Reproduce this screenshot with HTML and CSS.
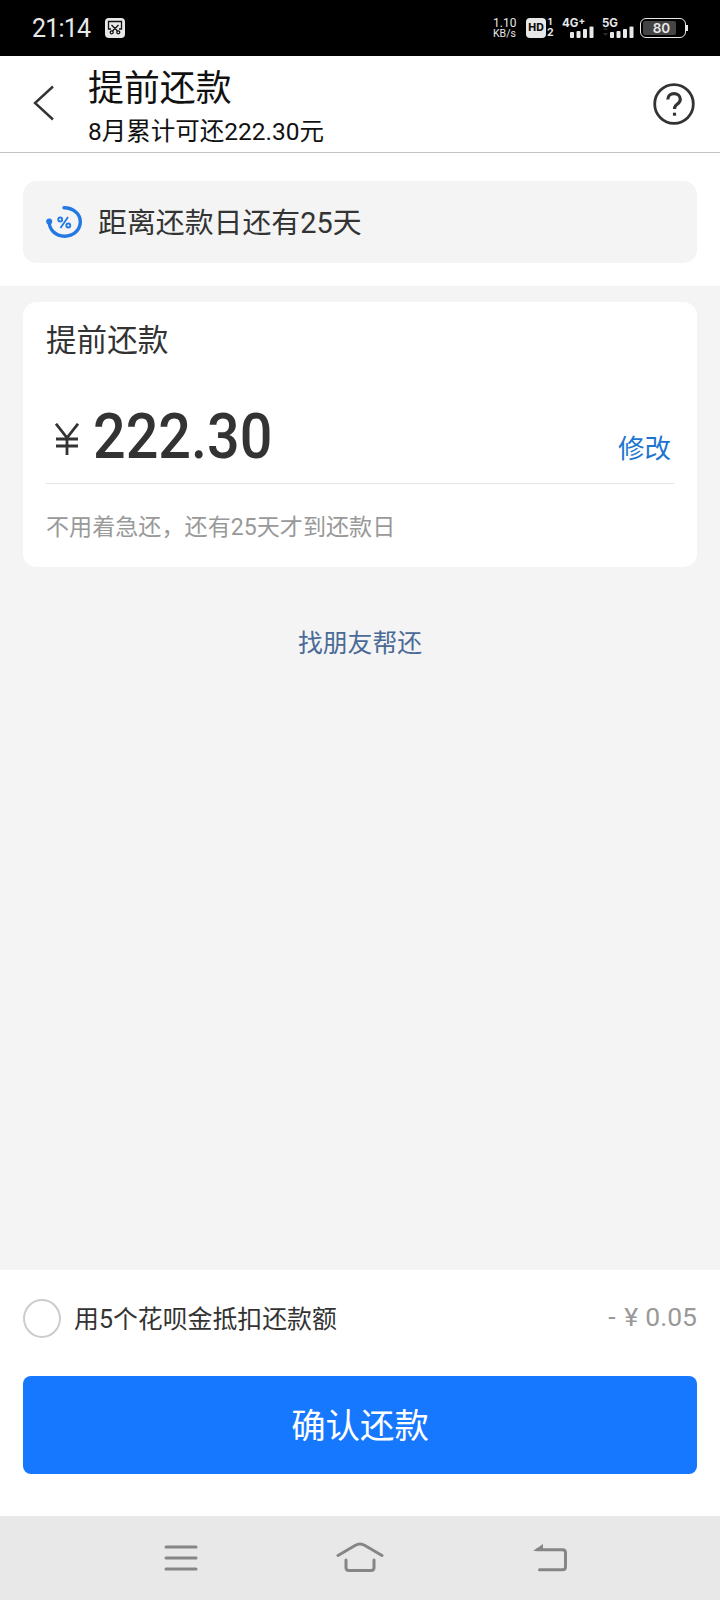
FILE: index.html
```html
<!DOCTYPE html>
<html lang="zh-CN">
<head>
    <meta charset="utf-8">
    <meta name="viewport" content="width=device-width, initial-scale=1">
    <title>提前还款</title>
    <link rel="stylesheet" href="styles.css">
</head>
<body>
    <!-- status bar -->
    <div class="status">
        <span class="time">21:14</span>
        <svg class="shot" width="20" height="20" viewBox="0 0 20 20">
            <rect width="20" height="20" rx="4" fill="#e8e8e8"/>
            <g fill="none" stroke="#111" stroke-width="1.3">
                <path d="M6 11H3.5V3.5h13V11H14M6.5 7l6 6M13.500 7l-6 6"/>
                <circle cx="6.700" cy="14.300" r="1.500"/>
                <circle cx="13.300" cy="14.300" r="1.500"/>
            </g>
        </svg>
        <div class="speed"><span>1.10</span><span>KB/s</span></div>
        <div class="hd">HD</div>
        <div class="sims"><span>1</span><span>2</span></div>
        <div class="signal">
            <span>4G<sup>+</sup></span>
            <svg width="24" height="12" viewBox="0 0 24 12" fill="#e8e8e8">
                <rect x="0" y="6" width="4" height="6" rx="1"/>
                <rect x="6.500" y="5" width="4" height="7" rx="1"/>
                <rect x="13" y="3" width="4" height="9" rx="1"/>
                <rect x="19.500" y="0.500" width="4" height="11.500" rx="1"/>
            </svg>
        </div>
        <div class="signal five">
            <span>5G</span>
            <svg width="31" height="12" viewBox="0 0 31 12" fill="#e8e8e8">
                <path d="M0 4l2.500-3L5 4zM0 7l2.500 3L5 7z" fill="#2c2c2c"/>
                <rect x="7" y="6" width="4" height="6" rx="1"/>
                <rect x="13.500" y="5" width="4" height="7" rx="1"/>
                <rect x="20" y="3" width="4" height="9" rx="1"/>
                <rect x="26.500" y="0.500" width="4" height="11.500" rx="1"/>
            </svg>
        </div>
        <div class="battery"><span>80</span></div>
    </div>

    <!-- title bar -->
    <header class="header">
        <svg class="back" width="22" height="36" viewBox="0 0 22 36">
            <path d="M20 1.500L2 18l18 16.500" fill="none" stroke="#333" stroke-width="2.400"/>
        </svg>
        <div class="titles">
            <h1>提前还款</h1>
            <p>8月累计可还222.30元</p>
        </div>
        <svg class="help" width="42" height="42" viewBox="0 0 42 42" fill="none" stroke="#333">
            <circle cx="21" cy="21" r="19.300" stroke-width="2.800"/>
            <path d="M14.800 16.500c0-3.600 2.800-5.900 6.200-5.900s6.300 2.300 6.300 5.700c0 2.600-1.500 3.800-3.200 5-1.800 1.300-2.600 2.200-2.600 4.800" stroke-width="3.200"/>
            <path d="M19.900 31.200h3.200" stroke-width="3"/>
        </svg>
    </header>

    <div class="notice-wrap">
        <div class="notice">
            <svg width="36" height="32" viewBox="0 0 36 32" fill="none" stroke="#2478e4">
                <path d="M18 1.800c9 0 16.300 6 16.300 14S27.500 30.200 18.500 30.200 3.500 24 3.200 16" stroke-width="3.400" stroke-linecap="round"/>
                <circle cx="3.200" cy="15.500" r="3" fill="#2478e4" stroke="none"/>
                <g stroke-width="1.800">
                    <circle cx="14.200" cy="13.500" r="2"/>
                    <circle cx="22.300" cy="19.500" r="2"/>
                    <path d="M22 11l-7.500 11"/>
                </g>
            </svg>
            <span>距离还款日还有25天</span>
        </div>
    </div>

    <!-- repay amount -->
    <main class="main">
        <section class="card">
            <h2>提前还款</h2>
            <div class="amount">
                <svg class="yen" width="24" height="32" viewBox="0 0 24 32" fill="none" stroke="#333" stroke-width="2.800">
                    <path d="M1 .8l11 14 11-14M12 14.500V32M1 16h22M1 23h22"/>
                </svg>
                <span class="num">222.30</span>
                <a class="edit">修改</a>
            </div>
            <p class="tip">不用着急还，还有25天才到还款日</p>
        </section>
        <a class="friend">找朋友帮还</a>
    </main>

    <!-- bottom panel -->
    <footer class="footer">
        <div class="deduct">
            <span class="radio"></span>
            <span class="label">用5个花呗金抵扣还款额</span>
            <span class="minus"><i>-</i><i class="cny">¥</i>0.05</span>
        </div>
        <button class="confirm">确认还款</button>
    </footer>

    <!-- system navigation -->
    <nav class="nav">
        <svg width="34" height="26" viewBox="0 0 34 26" stroke="#868686" stroke-width="3" stroke-linecap="round">
            <path d="M2 2h30M2 13h30M2 24h30"/>
        </svg>
        <svg class="home" width="48" height="30" viewBox="0 0 48 30" fill="none" stroke="#868686" stroke-width="3" stroke-linecap="round">
            <path d="M2 13.500L19.500 3.300q4.500-2.600 9 0L46 13.500M10 18v7.500q0 3 3 3h22q3 0 3-3V18"/>
        </svg>
        <svg width="34" height="28" viewBox="0 0 34 28" fill="none" stroke="#868686" stroke-width="3" stroke-linecap="round">
            <path d="M4 5.800h25.500q3 0 3 3v14q0 3-3 3H6.500"/>
            <path d="M0 7L10 0v7z" fill="#868686" stroke="none"/>
        </svg>
    </nav>
</body>
</html>
```
FILE: styles.css
```css
* {
    box-sizing: border-box;
    margin: 0;
    padding: 0;
}

body {
    display: flex;
    flex-direction: column;
    width: 720px;
    height: 1600px;
    background: #fff;
    color: #333;
    font-family: Roboto, "Noto Sans CJK SC", sans-serif;
    font-weight: 400;
}

svg {
    display: block;
    flex: none;
}

/* status bar */
.status {
    display: flex;
    align-items: center;
    height: 56px;
    padding: 0 34px 0 32px;
    background: #000;
    color: #e8e8e8;
}

.time {
    width: 73px;
    font-size: 25px;
    letter-spacing: -0.8px;
}

.speed {
    display: flex;
    flex-direction: column;
    width: 33px;
    margin-left: auto;
    font-size: 10.5px;
    line-height: 11px;
}

.speed span:first-child {
    font-size: 12px;
    line-height: 10px;
}

.hd {
    width: 20px;
    height: 20px;
    border-radius: 4px;
    background: #e8e8e8;
    color: #111;
    font: 800 10.5px/20px Inter, sans-serif;
    text-align: center;
}

.sims {
    display: flex;
    flex-direction: column;
    width: 16px;
    padding-left: 1px;
    font: 700 10.5px/12px Inter, sans-serif;
}

.sims span:first-child {
    padding-left: 1px;
    font-size: 9px;
    line-height: 10px;
}

.signal {
    display: flex;
    flex-direction: column;
    align-items: flex-end;
    width: 32px;
    height: 20px;
    margin-right: 8px;
    font: 700 11.5px/10px Inter, sans-serif;
}

.signal span {
    align-self: flex-start;
    height: 8px;
}

.signal sup {
    font-size: 10px;
    line-height: 0;
    vertical-align: 3px;
}

.five {
    margin-right: 6px;
}

.battery {
    position: relative;
    width: 46px;
    height: 20px;
    padding: 2px;
    border: 1.5px solid #e8e8e8;
    border-radius: 6px;
}

.battery span {
    display: block;
    width: 33px;
    height: 14px;
    padding-left: 4px;
    border-radius: 2px;
    background: #444;
    font: 600 13.5px/14px Inter, sans-serif;
    text-align: center;
}

/* contact on the right end of the battery */
.battery::after {
    content: "";
    position: absolute;
    right: -3px;
    top: 6px;
    width: 2px;
    height: 6px;
    background: #e8e8e8;
}

/* title bar */
.header {
    display: flex;
    align-items: center;
    height: 97px;
    padding: 0 25px 0 33px;
    border-bottom: 1px solid #c4c4c4;
    color: #111;
}

.back {
    margin-top: -2px;
}

.titles {
    flex: 1;
    margin: 9px 0 0 33px;
}

h1 {
    font-size: 35.9px;
    font-weight: 400;
    line-height: 45px;
}

.titles p {
    font-size: 24.5px;
    line-height: 39px;
}

/* days left */
.notice-wrap {
    height: 133px;
    padding: 28px 23px 0;
}

.notice {
    display: flex;
    align-items: center;
    gap: 16px;
    height: 82px;
    padding-left: 23px;
    border-radius: 14px;
    background: #f4f4f4;
    font-size: 28.9px;
}

.notice span {
    margin-top: -4px;
}

/* card */
.main {
    flex: 1;
    padding: 16px 23px 0;
    background: #f4f4f4;
    text-align: center;
}

.card {
    height: 265px;
    padding: 0 23px;
    border-radius: 14px;
    background: #fff;
    text-align: left;
}

h2 {
    padding-top: 16px;
    font-size: 30.6px;
    font-weight: 400;
    line-height: 46px;
}

.amount {
    display: flex;
    height: 120px;
    border-bottom: 1px solid #e6e6e6;
}

.yen {
    margin: 59px 0 0 9px;
}

.num {
    margin: 37px 0 0 14px;
    font-size: 62.5px;
    font-weight: 500;
    line-height: 72px;
    transform: scaleX(0.92);
    transform-origin: left;
}

.edit {
    margin: 65px 3px 0 auto;
    color: #1c76cf;
    font-size: 26.5px;
    line-height: 40px;
}

.tip {
    margin-top: 26px;
    color: #999;
    font-size: 23.1px;
    line-height: 36px;
}

.friend {
    display: block;
    margin-top: 58px;
    color: #4a6a97;
    font-size: 24.8px;
    line-height: 38px;
}

/* bottom panel */
.footer {
    height: 246px;
    padding: 28px 23px 0;
}

.deduct {
    display: flex;
    align-items: center;
    height: 40px;
}

.radio {
    width: 38px;
    height: 39px;
    border: 2px solid #ccc;
    border-radius: 50%;
}

.label {
    margin: -2px 0 0 13px;
    font-size: 24.9px;
}

.minus {
    display: flex;
    margin: -4px 0 0 auto;
    color: #999;
    font-size: 26.5px;
}

.minus i {
    width: 16px;
    font-style: normal;
}

.minus .cny {
    width: 21px;
}

.confirm {
    display: block;
    width: 674px;
    height: 98px;
    margin-top: 38px;
    padding-bottom: 4px;
    border: none;
    border-radius: 8px;
    background: #1677ff;
    color: #fff;
    font-family: inherit;
    font-size: 34.4px;
}

/* system navigation */
.nav {
    display: flex;
    justify-content: space-between;
    height: 84px;
    padding: 28px 153px 0 164px;
    background: #e8e8e8;
}

.nav svg:first-child {
    margin-top: 1px;
}

.nav .home {
    margin: -2px 11px 0 0;
}
```
